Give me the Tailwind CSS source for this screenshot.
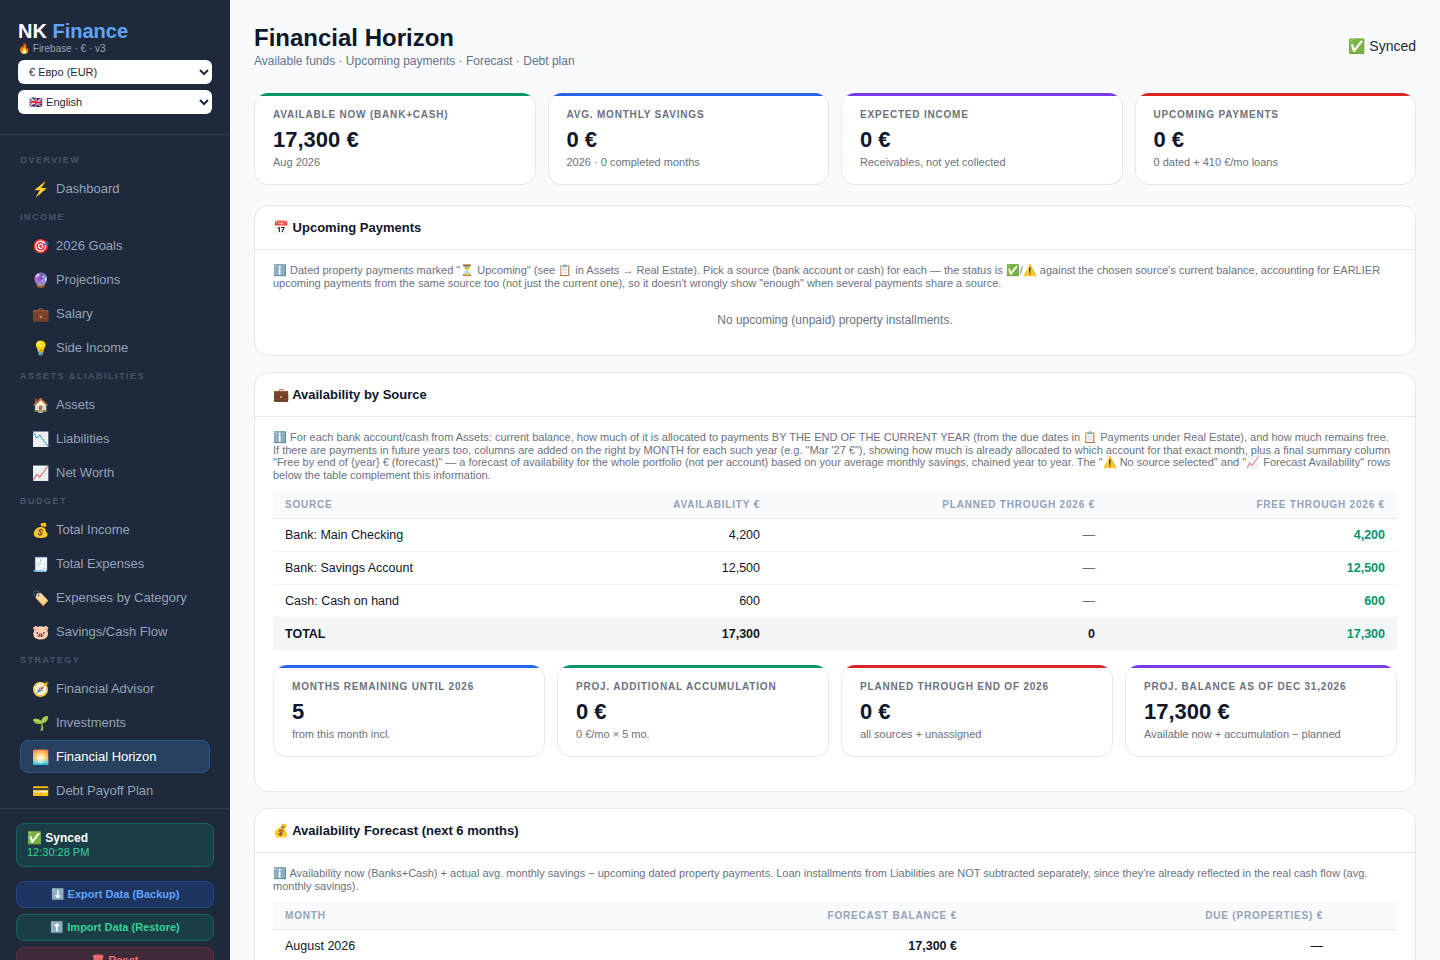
<!DOCTYPE html>
<html lang="en">
<head>
    <meta charset="UTF-8">
    <meta name="viewport" content="width=device-width, initial-scale=1.0">
    <title>NK Finance - Financial Horizon</title>
    <script src="https://cdn.jsdelivr.net/npm/@tailwindcss/browser@4"></script>
</head>
<body class="h-screen overflow-hidden flex bg-[#f8fafc] text-[#0f172a] font-['Liberation_Sans',sans-serif]">

    <!-- Sidebar -->
    <aside class="w-[230px] h-screen shrink-0 overflow-hidden flex flex-col bg-[#1e293b]">
        <div class="h-[135px] shrink-0 px-[18px] pt-[20px] border-b border-[#334155]">
            <div class="text-[20px] leading-[22px] font-bold text-white">NK <span class="text-[#60a5fa]">Finance</span></div>
            <div class="text-[10px] leading-[12px] mt-px text-[#94a3b8]">🔥 Firebase · € · v3</div>
            <select class="block w-[194px] h-[24px] mt-[5px] px-[7px] rounded-md bg-white text-[11px] text-[#1e293b]"><option>€ Евро (EUR)</option></select>
            <select class="block w-[194px] h-[24px] mt-[6px] px-[7px] rounded-md bg-white text-[11px] text-[#1e293b]"><option>🇬🇧 English</option></select>
        </div>

        <nav class="h-[673px] shrink-0 px-5 pt-[14px] text-[13px] text-[#94a3b8]">
            <div class="h-[23px] flex items-center text-[9px] font-bold tracking-[1.5px] text-[#475569]">OVERVIEW</div>
            <a class="h-[33px] mb-px px-3 flex items-center gap-[9px]"><span class="w-[15px] pt-[2px] text-[14px]">⚡</span>Dashboard</a>

            <div class="h-[23px] flex items-center text-[9px] font-bold tracking-[1.5px] text-[#475569]">INCOME</div>
            <a class="h-[33px] mb-px px-3 flex items-center gap-[9px]"><span class="w-[15px] pt-[2px] text-[14px]">🎯</span>2026 Goals</a>
            <a class="h-[33px] mb-px px-3 flex items-center gap-[9px]"><span class="w-[15px] pt-[2px] text-[14px]">🔮</span>Projections</a>
            <a class="h-[33px] mb-px px-3 flex items-center gap-[9px]"><span class="w-[15px] pt-[2px] text-[14px]">💼</span>Salary</a>
            <a class="h-[33px] mb-px px-3 flex items-center gap-[9px]"><span class="w-[15px] pt-[2px] text-[14px]">💡</span>Side Income</a>

            <div class="h-[23px] flex items-center text-[9px] font-bold tracking-[1.5px] text-[#475569]">ASSETS &amp;LIABILITIES</div>
            <a class="h-[33px] mb-px px-3 flex items-center gap-[9px]"><span class="w-[15px] pt-[2px] text-[14px]">🏠</span>Assets</a>
            <a class="h-[33px] mb-px px-3 flex items-center gap-[9px]"><span class="w-[15px] pt-[2px] text-[14px]">📉</span>Liabilities</a>
            <a class="h-[33px] mb-px px-3 flex items-center gap-[9px]"><span class="w-[15px] pt-[2px] text-[14px]">📈</span>Net Worth</a>

            <div class="h-[23px] flex items-center text-[9px] font-bold tracking-[1.5px] text-[#475569]">BUDGET</div>
            <a class="h-[33px] mb-px px-3 flex items-center gap-[9px]"><span class="w-[15px] pt-[2px] text-[14px]">💰</span>Total Income</a>
            <a class="h-[33px] mb-px px-3 flex items-center gap-[9px]"><span class="w-[15px] pt-[2px] text-[14px]">🧾</span>Total Expenses</a>
            <a class="h-[33px] mb-px px-3 flex items-center gap-[9px]"><span class="w-[15px] pt-[2px] text-[14px]">🏷️</span>Expenses by Category</a>
            <a class="h-[33px] mb-px px-3 flex items-center gap-[9px]"><span class="w-[15px] pt-[2px] text-[14px]">🐷</span>Savings/Cash Flow</a>

            <div class="h-[23px] flex items-center text-[9px] font-bold tracking-[1.5px] text-[#475569]">STRATEGY</div>
            <a class="h-[33px] mb-px px-3 flex items-center gap-[9px]"><span class="w-[15px] pt-[2px] text-[14px]">🧭</span>Financial Advisor</a>
            <a class="h-[33px] mb-px px-3 flex items-center gap-[9px]"><span class="w-[15px] pt-[2px] text-[14px]">🌱</span>Investments</a>
            <a class="h-[33px] mb-px px-[11px] flex items-center gap-[9px] rounded-lg border border-[#2f5288] bg-[#28405f] text-white"><span class="w-[15px] pt-[2px] text-[14px]">🌅</span>Financial Horizon</a>
            <a class="h-[33px] mb-px px-3 flex items-center gap-[9px]"><span class="w-[15px] pt-[2px] text-[14px]">💳</span>Debt Payoff Plan</a>
        </nav>

        <div class="shrink-0 px-4 pt-[14px] border-t border-[#334155]">
            <div class="h-[44px] px-[10px] flex flex-col justify-center rounded-lg border border-[#14655a] bg-[#1b3d45]">
                <div class="text-[12px] leading-[14px] font-bold text-white">✅ Synced</div>
                <div class="text-[11px] leading-[14px] text-[#34d399]">12:30:28 PM</div>
            </div>
            <div class="h-[27px] mt-[14px] flex items-center justify-center rounded-lg border border-[#1e4585] bg-[#1d3461] text-[11px] font-bold text-[#60a5fa]">⬇️ Export Data (Backup)</div>
            <div class="h-[27px] mt-[6px] flex items-center justify-center rounded-lg border border-[#14655a] bg-[#1b3d45] text-[11px] font-bold text-[#34d399]">⬆️ Import Data (Restore)</div>
            <div class="h-[27px] mt-[6px] flex items-center justify-center rounded-lg border border-[#6b2c3a] bg-[#3f2a3a] text-[11px] font-bold text-[#f87171]">🗑 Reset</div>
        </div>
    </aside>

    <!-- Main -->
    <main class="flex-1 h-screen overflow-hidden px-6 pt-6">
        <header class="flex items-center justify-between h-[44px] mb-[25px]">
            <div>
                <h1 class="text-[24px] leading-[28px] font-bold">Financial Horizon</h1>
                <p class="text-[12px] leading-[15px] mt-[2px] text-[#64748b]">Available funds · Upcoming payments · Forecast · Debt plan</p>
            </div>
            <div class="text-[14px] text-[#1e293b]">✅ Synced</div>
        </header>

        <div class="grid grid-cols-4 gap-3 mb-5">
            <div class="h-[92px] rounded-[14px] overflow-hidden border-x border-b border-[#e2e8f0] bg-white">
                <div class="h-[3px] bg-[#059669]"></div>
                <div class="px-[18px] pt-[12px]">
                    <div class="text-[10px] leading-[13px] font-bold tracking-[0.8px] text-[#6b7280]">AVAILABLE NOW (BANK+CASH)</div>
                    <div class="text-[22px] leading-[26px] mt-[6px] font-bold">17,300 €</div>
                    <div class="text-[11px] leading-[13px] mt-[3px] text-[#6b7280]">Aug 2026</div>
                </div>
            </div>
            <div class="h-[92px] rounded-[14px] overflow-hidden border-x border-b border-[#e2e8f0] bg-white">
                <div class="h-[3px] bg-[#2563eb]"></div>
                <div class="px-[18px] pt-[12px]">
                    <div class="text-[10px] leading-[13px] font-bold tracking-[0.8px] text-[#6b7280]">AVG. MONTHLY SAVINGS</div>
                    <div class="text-[22px] leading-[26px] mt-[6px] font-bold">0 €</div>
                    <div class="text-[11px] leading-[13px] mt-[3px] text-[#6b7280]">2026 · 0 completed months</div>
                </div>
            </div>
            <div class="h-[92px] rounded-[14px] overflow-hidden border-x border-b border-[#e2e8f0] bg-white">
                <div class="h-[3px] bg-[#7c3aed]"></div>
                <div class="px-[18px] pt-[12px]">
                    <div class="text-[10px] leading-[13px] font-bold tracking-[0.8px] text-[#6b7280]">EXPECTED INCOME</div>
                    <div class="text-[22px] leading-[26px] mt-[6px] font-bold">0 €</div>
                    <div class="text-[11px] leading-[13px] mt-[3px] text-[#6b7280]">Receivables, not yet collected</div>
                </div>
            </div>
            <div class="h-[92px] rounded-[14px] overflow-hidden border-x border-b border-[#e2e8f0] bg-white">
                <div class="h-[3px] bg-[#dc2626]"></div>
                <div class="px-[18px] pt-[12px]">
                    <div class="text-[10px] leading-[13px] font-bold tracking-[0.8px] text-[#6b7280]">UPCOMING PAYMENTS</div>
                    <div class="text-[22px] leading-[26px] mt-[6px] font-bold">0 €</div>
                    <div class="text-[11px] leading-[13px] mt-[3px] text-[#6b7280]">0 dated + 410 €/mo loans</div>
                </div>
            </div>
        </div>

        <!-- Upcoming payments -->
        <section class="h-[151px] mb-4 rounded-[14px] border border-[#e2e8f0] bg-white">
            <h2 class="h-[44px] px-[18px] flex items-center border-b border-[#e2e8f0] text-[13px] font-bold">📅 Upcoming Payments</h2>
            <div class="px-[18px] pt-[14px]">
                <p class="text-[11px] leading-[12.6px] text-[#6b7280]">ℹ️ Dated property payments marked "⏳ Upcoming" (see 📋 in Assets → Real Estate). Pick a source (bank account or cash) for each — the status is ✅/⚠️ against the chosen source's current balance, accounting for EARLIER upcoming payments from the same source too (not just the current one), so it doesn't wrongly show "enough" when several payments share a source.</p>
                <p class="mt-[24px] text-center text-[12px] leading-[15px] text-[#6b7280]">No upcoming (unpaid) property installments.</p>
            </div>
        </section>

        <!-- Availability by source -->
        <section class="h-[420px] mb-4 rounded-[14px] border border-[#e2e8f0] bg-white">
            <h2 class="h-[44px] px-[18px] flex items-center border-b border-[#e2e8f0] text-[13px] font-bold">💼 Availability by Source</h2>
            <div class="px-[18px] pt-[14px]">
                <p class="text-[11px] leading-[12.6px] mb-[10px] text-[#6b7280]">ℹ️ For each bank account/cash from Assets: current balance, how much of it is allocated to payments BY THE END OF THE CURRENT YEAR (from the due dates in 📋 Payments under Real Estate), and how much remains free. If there are payments in future years too, columns are added on the right by MONTH for each such year (e.g. "Mar '27 €"), showing how much is already allocated to which account for that exact month, plus a final summary column "Free by end of {year} € (forecast)" — a forecast of availability for the whole portfolio (not per account) based on your average monthly savings, chained year to year. The "⚠️ No source selected" and "📈 Forecast Availability" rows below the table complement this information.</p>
                <table class="w-full table-fixed text-[12.5px]">
                    <thead>
                        <tr class="h-[27px] bg-[#f8fafc] border-b border-[#e2e8f0] text-[10px] tracking-[0.8px] text-[#94a3b8]">
                            <th class="w-[330px] px-3 text-left font-bold">SOURCE</th>
                            <th class="w-[169px] px-3 text-right font-bold">AVAILABILITY €</th>
                            <th class="w-[335px] px-3 text-right font-bold">PLANNED THROUGH 2026 €</th>
                            <th class="px-3 text-right font-bold">FREE THROUGH 2026 €</th>
                        </tr>
                    </thead>
                    <tbody>
                        <tr class="h-[33px] border-b border-[#f1f5f9]">
                            <td class="px-3">Bank: Main Checking</td>
                            <td class="px-3 text-right">4,200</td>
                            <td class="px-3 text-right text-[#64748b]">—</td>
                            <td class="px-3 text-right font-bold text-[#059669]">4,200</td>
                        </tr>
                        <tr class="h-[33px] border-b border-[#f1f5f9]">
                            <td class="px-3">Bank: Savings Account</td>
                            <td class="px-3 text-right">12,500</td>
                            <td class="px-3 text-right text-[#64748b]">—</td>
                            <td class="px-3 text-right font-bold text-[#059669]">12,500</td>
                        </tr>
                        <tr class="h-[33px] border-b border-[#f1f5f9]">
                            <td class="px-3">Cash: Cash on hand</td>
                            <td class="px-3 text-right">600</td>
                            <td class="px-3 text-right text-[#64748b]">—</td>
                            <td class="px-3 text-right font-bold text-[#059669]">600</td>
                        </tr>
                        <tr class="h-[33px] bg-[#f5f5f5] font-bold">
                            <td class="px-3">TOTAL</td>
                            <td class="px-3 text-right">17,300</td>
                            <td class="px-3 text-right">0</td>
                            <td class="px-3 text-right text-[#059669]">17,300</td>
                        </tr>
                    </tbody>
                </table>

                <div class="grid grid-cols-4 gap-3 mt-[15px]">
                    <div class="h-[92px] rounded-[14px] overflow-hidden border-x border-b border-[#e2e8f0] bg-white">
                        <div class="h-[3px] bg-[#2563eb]"></div>
                        <div class="px-[18px] pt-[12px]">
                            <div class="text-[10px] leading-[13px] font-bold tracking-[0.8px] text-[#6b7280]">MONTHS REMAINING UNTIL 2026</div>
                            <div class="text-[22px] leading-[26px] mt-[6px] font-bold">5</div>
                            <div class="text-[11px] leading-[13px] mt-[3px] text-[#6b7280]">from this month incl.</div>
                        </div>
                    </div>
                    <div class="h-[92px] rounded-[14px] overflow-hidden border-x border-b border-[#e2e8f0] bg-white">
                        <div class="h-[3px] bg-[#059669]"></div>
                        <div class="px-[18px] pt-[12px]">
                            <div class="text-[10px] leading-[13px] font-bold tracking-[0.8px] text-[#6b7280]">PROJ. ADDITIONAL ACCUMULATION</div>
                            <div class="text-[22px] leading-[26px] mt-[6px] font-bold">0 €</div>
                            <div class="text-[11px] leading-[13px] mt-[3px] text-[#6b7280]">0 €/mo × 5 mo.</div>
                        </div>
                    </div>
                    <div class="h-[92px] rounded-[14px] overflow-hidden border-x border-b border-[#e2e8f0] bg-white">
                        <div class="h-[3px] bg-[#dc2626]"></div>
                        <div class="px-[18px] pt-[12px]">
                            <div class="text-[10px] leading-[13px] font-bold tracking-[0.8px] text-[#6b7280]">PLANNED THROUGH END OF 2026</div>
                            <div class="text-[22px] leading-[26px] mt-[6px] font-bold">0 €</div>
                            <div class="text-[11px] leading-[13px] mt-[3px] text-[#6b7280]">all sources + unassigned</div>
                        </div>
                    </div>
                    <div class="h-[92px] rounded-[14px] overflow-hidden border-x border-b border-[#e2e8f0] bg-white">
                        <div class="h-[3px] bg-[#7c3aed]"></div>
                        <div class="px-[18px] pt-[12px]">
                            <div class="text-[10px] leading-[13px] font-bold tracking-[0.8px] text-[#6b7280]">PROJ. BALANCE AS OF DEC 31,2026</div>
                            <div class="text-[22px] leading-[26px] mt-[6px] font-bold">17,300 €</div>
                            <div class="text-[11px] leading-[13px] mt-[3px] text-[#6b7280]">Available now + accumulation − planned</div>
                        </div>
                    </div>
                </div>
            </div>
        </section>

        <!-- Forecast -->
        <section class="rounded-[14px] border border-[#e2e8f0] bg-white">
            <h2 class="h-[44px] px-[18px] flex items-center border-b border-[#e2e8f0] text-[13px] font-bold">💰 Availability Forecast (next 6 months)</h2>
            <div class="px-[18px] pt-[14px] pb-4">
                <p class="text-[11px] leading-[12.6px] mb-[10px] text-[#6b7280]">ℹ️ Availability now (Banks+Cash) + actual avg. monthly savings − upcoming dated property payments. Loan installments from Liabilities are NOT subtracted separately, since they're already reflected in the real cash flow (avg. monthly savings).</p>
                <table class="w-full table-fixed text-[12.5px]">
                    <thead>
                        <tr class="h-[27px] bg-[#f8fafc] border-b border-[#e2e8f0] text-[10px] tracking-[0.8px] text-[#94a3b8]">
                            <th class="w-[490px] px-3 text-left font-bold">MONTH</th>
                            <th class="w-[206px] px-3 text-right font-bold">FORECAST BALANCE €</th>
                            <th class="w-[366px] px-3 text-right font-bold">DUE (PROPERTIES) €</th>
                            <th class="px-3"></th>
                        </tr>
                    </thead>
                    <tbody>
                        <tr class="h-[34px] border-b border-[#f1f5f9]">
                            <td class="px-3">August 2026</td>
                            <td class="px-3 text-right font-bold">17,300 €</td>
                            <td class="px-3 text-right">—</td>
                            <td class="px-3"></td>
                        </tr>
                    </tbody>
                </table>
            </div>
        </section>
    </main>
</body>
</html>
